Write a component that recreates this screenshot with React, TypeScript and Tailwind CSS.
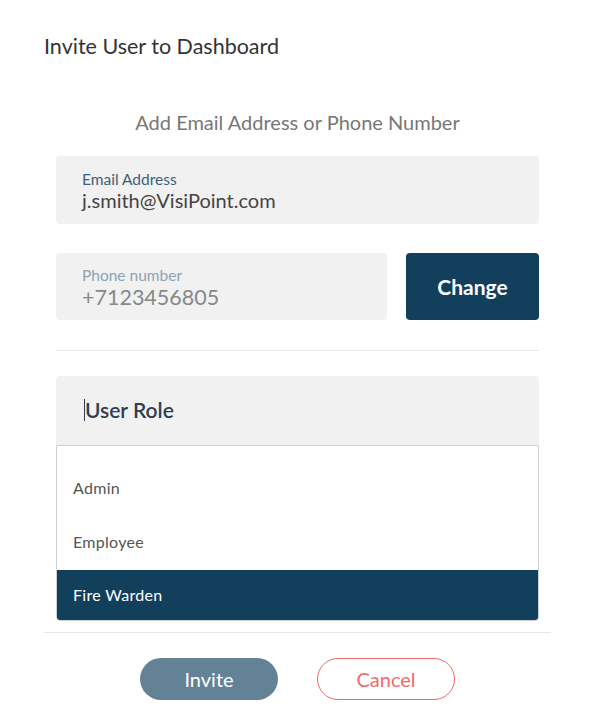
import { useState } from 'react';

const ROLES = ['Admin', 'Employee', 'Fire Warden'];

export default function App() {
  const [role, setRole] = useState('Fire Warden');

  return (
    <div className="w-[590px] h-[714px] bg-white font-['Lato','Noto_Sans',sans-serif] text-[#333]">
      <div className="pl-[44px] pr-[39px] pt-[33px]">
        <h1 className="text-[21.5px] leading-[26px] text-[#333]">Invite User to Dashboard</h1>

        <div className="px-[12px]">
          <p className="mt-[52px] text-center text-[20px] leading-[22px] text-[#777]">
            Add Email Address or Phone Number
          </p>

          {/* Email */}
          <div className="mt-[23px] h-[68px] rounded-[4px] bg-[#f1f1f1] px-[26px] pt-[14px]">
            <div className="text-[15.5px] leading-[18px] text-[#3d5f78]">Email Address</div>
            <div className="text-[20px] leading-[24px] text-[#444]">j.smith@VisiPoint.com</div>
          </div>

          {/* Phone + change */}
          <div className="mt-[29px] flex gap-[19px]">
            <div className="flex-1 h-[67px] rounded-[4px] bg-[#f1f1f1] px-[26px] pt-[13px]">
              <div className="text-[15.5px] leading-[18px] text-[#8ea3b3]">Phone number</div>
              <div className="text-[21.5px] leading-[26px] text-[#888]">+7123456805</div>
            </div>
            <button className="w-[133px] h-[67px] rounded-[4px] bg-[#123f5c] text-white text-[21px] font-bold">
              Change
            </button>
          </div>

          <div className="mt-[30px] h-px bg-[#e6e6e6]" />

          {/* User role select */}
          <div className="mt-[25px]">
            <div className="h-[69px] rounded-t-[4px] bg-[#f1f1f1] pl-[28px] pb-[1px] flex items-center">
              <span className="w-px h-[22px] bg-[#2d3e50]" />
              <span className="text-[21px] font-semibold text-[#2d3e50]">User Role</span>
            </div>
            <div className="border border-[#cdd2d8] rounded-b-[4px] overflow-hidden pt-[15px] bg-white">
              {ROLES.map((r, i) => (
                <div
                  key={r}
                  onClick={() => setRole(r)}
                  className={`px-[16px] flex items-center text-[16px] tracking-[0.3px] cursor-pointer ${
                    i === 0 ? 'h-[54px]' : i === 1 ? 'h-[55px] pb-[2px]' : 'h-[50px]'
                  } ${role === r ? 'bg-[#123f5c] text-white' : 'text-[#555]'}`}
                >
                  {r}
                </div>
              ))}
            </div>
          </div>
        </div>

        <div className="mt-[11px] h-px bg-[#e6e6e6]" />

        <div className="mt-[25px] flex justify-center gap-[39px]">
          <button className="w-[138px] h-[42px] rounded-full bg-[#648296] text-white text-[20px]">
            Invite
          </button>
          <button className="w-[138px] h-[42px] rounded-full border border-[#ef6a6a] text-[#ef6a6a] text-[20px]">
            Cancel
          </button>
        </div>
      </div>
    </div>
  );
}
